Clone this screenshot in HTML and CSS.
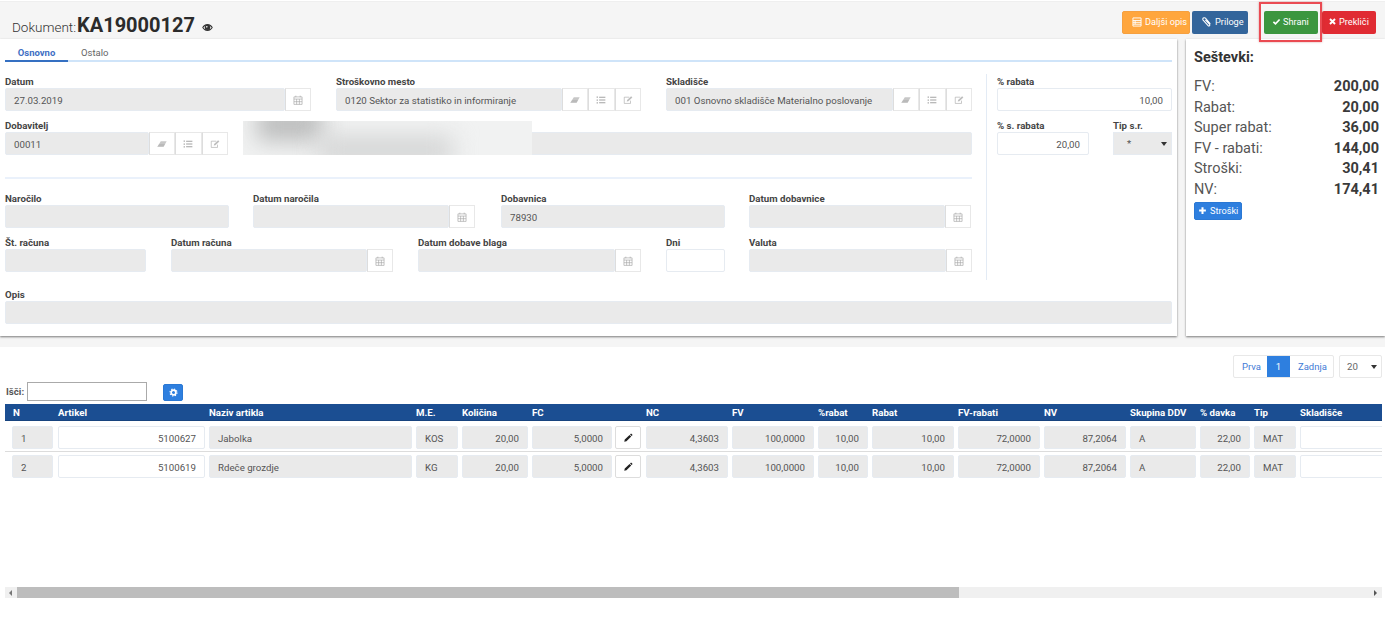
FILE: index.html
```html
<!DOCTYPE html>
<html lang="sl">
<head>
<meta charset="utf-8">
<title>Dokument KA19000127</title>
<link rel="stylesheet" href="styles.css">
</head>
<body>
<svg class="defs" width="0" height="0" aria-hidden="true">
  <symbol id="i-cal" viewBox="0 0 16 16"><path d="M4.500 1v2.500M11.500 1v2.500M1.500 3h13v12h-13zM1.500 6.500h13M1.500 10.700h13M5.800 6.500v8.500M10.200 6.500v8.500" fill="none" stroke="currentColor" stroke-width="1"/></symbol>
  <symbol id="i-eraser" viewBox="0 0 16 16"><path d="M6 3.500H15.500L10.500 12.500H.5z" fill="currentColor" opacity=".6"/><path d="M3.500 8H13L10.500 12.500H.5z" fill="currentColor" opacity=".35"/></symbol>
  <symbol id="i-list" viewBox="0 0 16 16"><path d="M5 3.500h10M5 8h10M5 12.500h10" stroke="currentColor" stroke-width="1.700" fill="none"/><path d="M1 2.500h2v2H1zM1 7h2v2H1zM1 11.500h2v2H1z" fill="currentColor"/></symbol>
  <symbol id="i-edit" viewBox="0 0 16 16"><path d="M12 9v4.500H2v-10h8" fill="none" stroke="currentColor" stroke-width="1.300" opacity=".7"/><path d="M6 10.500l.6-2.400L13 2l2 2-6.400 6z" fill="currentColor" opacity=".7"/></symbol>
  <symbol id="i-eye" viewBox="0 0 16 12"><path fill-rule="evenodd" d="M8 1C4.500 1 1.800 3.200.3 6c1.500 2.800 4.200 5 7.700 5s6.200-2.200 7.700-5C14.200 3.200 11.500 1 8 1zM2 6c.9-1.300 2-2.300 3.300-3A3.800 3.800 0 0 0 8 9.700 3.800 3.800 0 0 0 10.700 3C12 3.700 13.100 4.700 14 6c-1.400 2-3.500 3.500-6 3.500S3.400 8 2 6z" fill="currentColor"/><circle cx="7" cy="5" r="1.200" fill="#f5f5f5"/></symbol>
  <symbol id="i-clip" viewBox="0 0 16 16"><path d="M13.500 11.500L6.500 3.200a2.200 2.200 0 0 0-3.400 2.800l7.200 8a1.400 1.400 0 0 0 2.200-1.800L6.300 5.500" fill="none" stroke="currentColor" stroke-width="1.500"/></symbol>
  <symbol id="i-check" viewBox="0 0 16 16"><path d="M2.500 8.500l3.700 3.500 7.300-7.500" fill="none" stroke="currentColor" stroke-width="3"/></symbol>
  <symbol id="i-x" viewBox="0 0 16 16"><path d="M3.500 3.500l9 9M12.500 3.500l-9 9" fill="none" stroke="currentColor" stroke-width="3.400"/></symbol>
  <symbol id="i-plus" viewBox="0 0 16 16"><path d="M8 2v12M2 8h12" fill="none" stroke="currentColor" stroke-width="3.600"/></symbol>
  <symbol id="i-gear" viewBox="0 0 16 16"><circle cx="8" cy="8" r="4.200" fill="none" stroke="currentColor" stroke-width="3"/><circle cx="8" cy="8" r="6.200" fill="none" stroke="currentColor" stroke-width="2" stroke-dasharray="2.400 2.470"/></symbol>
  <symbol id="i-pencil" viewBox="0 0 16 16"><path d="M2 14l.8-3.500L10.500 3l2.700 2.700L5.500 13.200zM11.300 2.200l1-.9a1 1 0 0 1 1.300 0l1.200 1.200a1 1 0 0 1 0 1.300l-1 1z" fill="currentColor"/></symbol>
  <symbol id="i-listalt" viewBox="0 0 16 16"><path d="M1.500 1.500h13v13h-13zM1.500 5.500h13M1.500 8.500h13M1.500 11.500h13M5 5.500v6" fill="none" stroke="currentColor" stroke-width="1.500"/></symbol>
</svg>

<header class="topbar">
  <h1 class="title"><span class="title-label">Dokument:</span> <strong>KA19000127</strong><svg class="eye"><use href="#i-eye"/></svg></h1>
  <div class="actions">
    <a class="btn btn-orange btn-opis"><svg class="ic"><use href="#i-listalt"/></svg>Daljši opis</a>
    <a class="btn btn-navy btn-pril"><svg class="ic ic-lg"><use href="#i-clip"/></svg>Priloge</a>
    <a class="btn btn-green btn-save"><svg class="ic"><use href="#i-check"/></svg>Shrani</a>
    <a class="btn btn-red btn-cancel"><svg class="ic"><use href="#i-x"/></svg>Prekliči</a>
    <span class="highlight"></span>
  </div>
</header>

<div class="panels">
  <section class="panel main">
    <nav class="tabs">
      <a class="tab active">Osnovno</a>
      <a class="tab">Ostalo</a>
    </nav>
    <div class="form-top">
      <div class="form-left">
        <div class="row row-3">
          <div class="field"><label>Datum</label>
            <div class="group"><div class="inp">27.03.2019</div><span class="addon"><svg><use href="#i-cal"/></svg></span></div></div>
          <div class="field"><label>Stroškovno mesto</label>
            <div class="group"><div class="inp">0120 Sektor za statistiko in informiranje</div><span class="addon"><svg><use href="#i-eraser"/></svg></span><span class="addon"><svg><use href="#i-list"/></svg></span><span class="addon"><svg><use href="#i-edit"/></svg></span></div></div>
          <div class="field"><label>Skladišče</label>
            <div class="group"><div class="inp">001 Osnovno skladišče Materialno poslovanje</div><span class="addon"><svg><use href="#i-eraser"/></svg></span><span class="addon"><svg><use href="#i-list"/></svg></span><span class="addon"><svg><use href="#i-edit"/></svg></span></div></div>
        </div>
        <div class="row row-sup">
          <div class="field"><label>Dobavitelj</label>
            <div class="group"><div class="inp">00011</div><span class="addon"><svg><use href="#i-eraser"/></svg></span><span class="addon"><svg><use href="#i-list"/></svg></span><span class="addon"><svg><use href="#i-edit"/></svg></span></div></div>
          <div class="field field-name"><label>&nbsp;</label>
            <div class="inp"></div>
            <div class="blur"><i class="blob-a"></i><i class="blob-b"></i></div></div>
        </div>
        <hr class="sep">
        <div class="row row-4">
          <div class="field"><label>Naročilo</label><div class="inp"></div></div>
          <div class="field field-narrow"><label>Datum naročila</label>
            <div class="group"><div class="inp"></div><span class="addon"><svg><use href="#i-cal"/></svg></span></div></div>
          <div class="field"><label>Dobavnica</label><div class="inp">78930</div></div>
          <div class="field"><label>Datum dobavnice</label>
            <div class="group"><div class="inp"></div><span class="addon"><svg><use href="#i-cal"/></svg></span></div></div>
        </div>
        <div class="row row-5">
          <div class="field"><label>Št. računa</label><div class="inp"></div></div>
          <div class="field"><label>Datum računa</label>
            <div class="group"><div class="inp"></div><span class="addon"><svg><use href="#i-cal"/></svg></span></div></div>
          <div class="field"><label>Datum dobave blaga</label>
            <div class="group"><div class="inp"></div><span class="addon"><svg><use href="#i-cal"/></svg></span></div></div>
          <div class="field"><label>Dni</label><div class="inp inp-white"></div></div>
          <div class="field"><label>Valuta</label>
            <div class="group"><div class="inp"></div><span class="addon"><svg><use href="#i-cal"/></svg></span></div></div>
        </div>
      </div>
      <div class="form-right">
        <div class="field"><label>% rabata</label><div class="inp inp-white num">10,00</div></div>
        <div class="row row-disc">
          <div class="field"><label>% s. rabata</label><div class="inp inp-white num">20,00</div></div>
          <div class="field"><label>Tip s.r.</label><div class="inp sel"><span>*</span><b class="caret"></b></div></div>
        </div>
      </div>
    </div>
    <div class="field field-opis"><label>Opis</label><div class="inp"></div></div>
  </section>

  <aside class="panel side">
    <h2>Seštevki:</h2>
    <dl class="totals">
      <div><dt>FV:</dt><dd>200,00</dd></div>
      <div><dt>Rabat:</dt><dd>20,00</dd></div>
      <div><dt>Super rabat:</dt><dd>36,00</dd></div>
      <div><dt>FV - rabati:</dt><dd>144,00</dd></div>
      <div><dt>Stroški:</dt><dd>30,41</dd></div>
      <div><dt>NV:</dt><dd>174,41</dd></div>
    </dl>
    <a class="btn btn-blue btn-cost"><svg class="ic"><use href="#i-plus"/></svg>Stroški</a>
  </aside>
</div>

<main class="lower">
  <div class="pager-row">
    <div class="pager"><a>Prva</a><a class="current">1</a><a>Zadnja</a></div>
    <div class="page-size"><span>20</span><b class="caret"></b></div>
  </div>
  <div class="search">
    <label>Išči:</label><div class="search-input"></div>
    <a class="btn btn-blue btn-gear"><svg><use href="#i-gear"/></svg></a>
  </div>
  <div class="grid">
    <div class="tr th">
      <div class="c-n">N</div><div>Artikel</div><div>Naziv artikla</div><div>M.E.</div><div>Količina</div><div>FC</div><div>NC</div><div>FV</div><div>%rabat</div><div>Rabat</div><div>FV-rabati</div><div>NV</div><div>Skupina DDV</div><div>% davka</div><div>Tip</div><div>Skladišče</div>
    </div>
    <div class="tr td td-first">
      <div><div class="inp">1</div></div><div><div class="inp inp-white num">5100627</div></div><div><div class="inp">Jabolka</div></div><div><div class="inp">KOS</div></div><div><div class="inp num">20,00</div></div>
      <div class="fc"><div class="inp num">5,0000</div><span class="pen"><svg><use href="#i-pencil"/></svg></span></div>
      <div><div class="inp num">4,3603</div></div><div><div class="inp num">100,0000</div></div><div><div class="inp num">10,00</div></div><div><div class="inp num">10,00</div></div><div><div class="inp num">72,0000</div></div><div><div class="inp num">87,2064</div></div><div><div class="inp">A</div></div><div><div class="inp num">22,00</div></div><div><div class="inp">MAT</div></div><div><div class="inp inp-white"></div></div>
    </div>
    <div class="tr td">
      <div><div class="inp">2</div></div><div><div class="inp inp-white num">5100619</div></div><div><div class="inp">Rdeče grozdje</div></div><div><div class="inp">KG</div></div><div><div class="inp num">20,00</div></div>
      <div class="fc"><div class="inp num">5,0000</div><span class="pen"><svg><use href="#i-pencil"/></svg></span></div>
      <div><div class="inp num">4,3603</div></div><div><div class="inp num">100,0000</div></div><div><div class="inp num">10,00</div></div><div><div class="inp num">10,00</div></div><div><div class="inp num">72,0000</div></div><div><div class="inp num">87,2064</div></div><div><div class="inp">A</div></div><div><div class="inp num">22,00</div></div><div><div class="inp">MAT</div></div><div><div class="inp inp-white"></div></div>
    </div>
  </div>
  <div class="hscroll"><span class="arrow-l"></span><span class="thumb"></span><span class="arrow-r"></span></div>
</main>
</body>
</html>
```

FILE: styles.css
```css
* { box-sizing: border-box; }
html, body { margin: 0; padding: 0; }
body {
  width: 1385px;
  height: 619px;
  overflow: hidden;
  background: #fff;
  font-family: Roboto, "Liberation Sans", sans-serif;
  font-size: 9.700px;
  color: #444;
}
.defs { position: absolute; }

/* top bar */
.topbar {
  margin-top: 1px;
  height: 38px;
  padding: 9px 9px 0 12px;
  display: flex;
  justify-content: space-between;
  background: #f5f5f5;
  border-top: 1px solid #efefef;
}
.title { margin: 0; font-weight: 400; font-size: 14px; line-height: 28px; color: #444; display: flex; align-items: baseline; }
.title-label { font-size: 13.500px; font-weight: 300; color: #333; margin-right: 1px; }
.title strong { font-size: 20px; font-weight: 700; color: #2b2b2b; }
.eye { width: 11px; height: 9px; margin-left: 7px; color: #333; }
.actions { position: relative; display: flex; height: 23px; }
.btn {
  display: flex;
  align-items: center;
  height: 23px;
  padding-bottom: 2px;
  border-radius: 2px;
  color: #fff;
  font-size: 9.200px;
}
.btn-orange { background: #ffa63d; border: 1px solid #f5a040; width: 68px; padding-left: 9px; }
.btn-navy { background: #33659b; margin-left: 2px; width: 56px; padding-left: 9px; }
.btn-green { background: #3c963f; margin-left: 16px; width: 54px; padding-left: 8px; }
.btn-red { background: #e02b33; margin-left: 4px; width: 54px; padding-left: 6px; }
.ic { width: 9px; height: 9px; margin-right: 2px; flex: none; }
.btn-opis .ic { width: 10px; height: 10px; margin-right: 3px; }
.ic-lg { width: 11px; height: 11px; margin-right: 3px; }
.highlight {
  position: absolute;
  left: 137px;
  top: -9px;
  width: 63px;
  height: 40px;
  border: 2px solid #ea4a52;
  box-shadow: 0 0 2px rgba(180, 60, 60, .5);
  pointer-events: none;
}

/* panels */
.panels {
  display: flex;
  justify-content: space-between;
  height: 308px;
  background: #f5f5f5;
  padding-bottom: 11px;
}
.panel { background: #fff; height: 297px; box-shadow: 0 1px 2px rgba(0, 0, 0, .5); }
.main { width: 1177px; padding: 0 5px; }
.side { width: 199px; padding: 10px 6px 0 8px; }

.tabs {
  display: flex;
  height: 23px;
  border-bottom: 2px solid #cfe4f9;
  font-size: 9.500px;
}
.tab { width: 63px; margin-bottom: -2px; padding-top: 8px; text-align: center; color: #666; }
.tab.active { color: #3f6fc4; font-weight: 700; border-bottom: 2px solid #3570c2; }
.tab + .tab { width: 43px; text-align: left; padding-left: 13px; }

/* form */
.form-top { display: flex; margin-top: 13px; }
.form-left { width: 967px; padding-bottom: 8px; }
.form-right {
  width: 186px;
  margin-left: 14px;
  margin-top: -1px;
  padding: 1px 0 0 10px;
  border-left: 1px solid #e3ebf5;
}
.row { display: grid; margin-bottom: 8px; }
.row:last-child { margin-bottom: 0; }
.row-3 { grid-template-columns: 306px 305px 306px; column-gap: 25px; }
.row-sup { grid-template-columns: 223px 729px; column-gap: 15px; }
.row-4 { grid-template-columns: 224px 224px 224px 222px; column-gap: 24px; }
.field-narrow { width: 222px; }
.row-5 { grid-template-columns: 141px 222px 223px 59px 222px; column-gap: 25px; }
.row-disc { grid-template-columns: 92px 59px; column-gap: 24px; margin-top: 8px; }
.row-5 .field:nth-child(5) { margin-left: -1px; }
.sep { height: 2px; margin: 22px 0 13px; border: 0; background: #eaf1fb; }

.field { position: relative; min-width: 0; }
label {
  display: block;
  height: 13px;
  font-size: 9.700px;
  line-height: 14px;
  font-weight: 700;
  color: #444;
}
.inp {
  height: 23px;
  line-height: 23px;
  padding: 0 8px;
  background: #eaeaea;
  border: 1px solid #e6ebf1;
  border-radius: 2px;
  white-space: nowrap;
  overflow: hidden;
  color: #555;
}
.inp-white { background: #fff; }
.num { text-align: right; }
.group { display: flex; }
.group .inp { flex: 1; min-width: 0; }
.addon {
  flex: none;
  width: 26px;
  height: 23px;
  display: flex;
  align-items: center;
  justify-content: center;
  background: #fff;
  border: 1px solid #e8e8e8;
  border-left-color: #ddd;
  color: #a2a2a2;
}
.addon + .addon { width: 26.500px; }
.addon svg { width: 10px; height: 10px; }
.sel { display: flex; justify-content: space-between; align-items: center; padding: 0 4px 0 13px; border-radius: 0; }
.caret { width: 0; height: 0; border: 3px solid transparent; border-top: 4px solid #333; border-bottom: 0; }

.blur {
  position: absolute;
  left: 0;
  top: 2px;
  width: 289px;
  height: 34px;
  overflow: hidden;
  background: #f1f2f2;
}
.blob-a, .blob-b { position: absolute; display: block; }
.blob-a { left: 14px; top: -14px; width: 66px; height: 34px; background: #bcbdbd; filter: blur(11px); }
.blob-b { left: 75px; top: 16px; width: 135px; height: 26px; background: #d2d3d3; filter: blur(12px); }

.field-opis { margin-top: 8px; }

/* totals */
.side h2 { margin: 0 0 11px; font-size: 14.500px; font-weight: 700; line-height: 17px; color: #333; }
.totals { margin: 0 0 2px; }
.totals div { display: flex; justify-content: space-between; height: 20.500px; line-height: 20.500px; font-size: 14.500px; }
.totals dt { color: #555; }
.totals dd { margin: 0; font-weight: 700; color: #3a3a3a; }
.btn-blue { background: #2e7fdf; border: 1px solid #2a78d4; }
.btn-cost { width: 48px; height: 18px; padding-left: 3px; font-size: 9.200px; }
.btn-cost .ic { margin-right: 3px; }

/* lower */
.lower { padding: 8px 3px 0 5px; }
.pager-row { display: flex; justify-content: flex-end; height: 23px; }
.pager { display: flex; border: 1px solid #e8e8e8; border-radius: 2px; font-size: 9.500px; line-height: 21px; color: #3f7bd6; }
.pager a { padding: 0 8px; }
.pager a:first-child { width: 33px; }
.pager a:last-child { width: 43px; }
.pager .current { width: 23px; background: #2e7fdf; color: #fff; text-align: center; }
.page-size { display: flex; justify-content: space-between; align-items: center; width: 43px; margin-left: 5px; padding: 0 4px 0 7px; border: 1px solid #e8e8e8; border-radius: 2px; color: #666; }

.search { display: flex; align-items: center; height: 20px; margin-top: 3px; margin-left: 1px; }
.search label { width: 21px; height: auto; line-height: 13px; color: #555; }
.search-input { width: 120px; height: 19px; border: 1px solid #aaa; }
.btn-gear { width: 20px; height: 17px; margin-left: 16px; margin-top: 3px; padding: 0; justify-content: center; }
.btn-gear svg { width: 9px; height: 9px; }

.grid { margin-top: 3px; overflow: hidden; }
.tr {
  display: grid;
  grid-template-columns: 46px 151px 207px 46px 70px 114px 86px 86px 54px 86px 86px 86px 70px 54px 46px 82px;
  padding-left: 7px;
}
.th {
  height: 17px;
  background: #1b4e92;
  border-bottom: 1px solid #17437e;
  color: #fff;
  font-size: 9.700px;
  font-weight: 700;
  line-height: 18px;
}
.c-n { padding-left: 1px; }
.td { height: 23px; }
.td > div { padding-right: 4px; min-width: 0; }
.td > div:first-child { padding-right: 5px; }
.td > div:last-child { padding-right: 0; width: 90px; }
.td-first { margin-top: 5px; }
.td-first + .td { margin-top: 6px; position: relative; }
.td-first + .td::before {
  content: "";
  position: absolute;
  left: 0;
  right: 0;
  top: -4px;
  height: 1px;
  background: #dcdcdc;
}
.fc { display: flex; }
.fc .inp { width: 80px; }
.pen {
  flex: none;
  width: 26px;
  height: 23px;
  margin-left: 3px;
  display: flex;
  align-items: center;
  justify-content: center;
  background: #fff;
  border: 1px solid #ddd;
  border-radius: 2px;
  color: #222;
}
.pen svg { width: 10px; height: 10px; }

.hscroll {
  display: flex;
  align-items: stretch;
  height: 11px;
  margin-top: 109px;
  background: #f0f0f0;
}
.arrow-l, .arrow-r { position: relative; width: 12px; }
.arrow-r { margin-left: auto; }
.arrow-l::before, .arrow-r::before {
  content: "";
  position: absolute;
  top: 3px;
  border: 3px solid transparent;
}
.arrow-l::before { left: 4px; border-right: 3px solid #777; border-left: 0; }
.arrow-r::before { right: 5px; border-left: 3px solid #555; border-right: 0; }
.thumb { width: 942px; background: #bdbdbd; }
```
